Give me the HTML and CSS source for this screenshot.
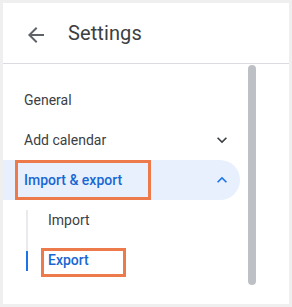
FILE: index.html
```html
<!DOCTYPE html>
<html lang="en">
<head>
<meta charset="utf-8">
<title>Settings</title>
<link rel="stylesheet" href="styles.css">
</head>
<body>
<div class="panel">
  <header class="header">
    <svg class="back" width="24" height="24" viewBox="0 0 24 24"><path d="M20 11H7.83l5.59-5.59L12 4l-8 8 8 8 1.41-1.41L7.83 13H20v-2z" fill="#5f6368"/></svg>
    <h1 class="title">Settings</h1>
  </header>
  <div class="content">
    <nav class="nav">
      <div class="item">General</div>
      <div class="item">Add calendar
        <svg class="chev" width="20" height="20" viewBox="0 0 24 24"><path d="M16.59 8.59L12 13.17 7.41 8.59 6 10l6 6 6-6z" fill="#3c4043"/></svg>
      </div>
      <div class="item active">Import &amp; export
        <svg class="chev" width="20" height="20" viewBox="0 0 24 24"><path d="M7.41 15.41L12 10.83l4.59 4.58L18 14l-6-6-6 6z" fill="#1a73e8"/></svg>
        <span class="mark mark-group"></span>
      </div>
      <div class="sub">
        <div class="subitem">Import</div>
        <div class="subitem current">Export<span class="mark mark-export"></span></div>
      </div>
    </nav>
    <div class="track"><div class="thumb"></div></div>
  </div>
</div>
</body>
</html>
```
FILE: styles.css
```css
html, body {
  margin: 0;
  padding: 0;
}
body {
  background: #efefef;
  font-family: Roboto, "Liberation Sans", Arial, sans-serif;
  width: 292px;
  height: 307px;
  overflow: hidden;
}
.panel {
  margin: 3px;
  width: 286px;
  height: 301px;
  background: #ffffff;
  display: flex;
  flex-direction: column;
}
.header {
  height: 60px;
  border-bottom: 1px solid #dadce0;
  display: flex;
  align-items: center;
  flex-shrink: 0;
}
.back {
  margin-left: 21px;
  margin-top: 3px;
}
.title {
  margin: 0 0 0 20px;
  font-size: 20px;
  font-weight: 400;
  color: #3c4043;
  letter-spacing: 0.1px;
}
.content {
  flex: 1;
  display: flex;
  min-height: 0;
}
.nav {
  width: 237px;
  padding-top: 16px;
}
.item {
  position: relative;
  height: 40px;
  display: flex;
  align-items: center;
  justify-content: space-between;
  padding: 0 8px 0 21px;
  font-size: 14px;
  color: #3c4043;
}
.item.active {
  background: #e8f0fe;
  border-radius: 0 20px 20px 0;
  color: #1967d2;
  font-weight: 500;
}
.chev {
  display: block;
}
.sub {
  position: relative;
  margin-left: 23px;
}
.sub::before {
  content: "";
  position: absolute;
  left: 0;
  top: 10px;
  bottom: 9px;
  width: 2px;
  background: #e8eaed;
}
.subitem {
  position: relative;
  height: 40px;
  display: flex;
  align-items: center;
  padding-left: 22px;
  font-size: 14px;
  color: #3c4043;
}
.subitem.current {
  color: #1967d2;
  font-weight: 500;
}
.subitem.current::before {
  content: "";
  position: absolute;
  left: 0;
  top: 11px;
  width: 2px;
  height: 20px;
  background: #1a73e8;
}
.mark {
  position: absolute;
  border: 3.5px solid #ec7a4a;
  box-sizing: border-box;
}
.mark-group {
  left: 12px;
  top: 0;
  width: 136px;
  height: 40px;
}
.mark-export {
  left: 15px;
  top: 8px;
  width: 85px;
  height: 29px;
}
.track {
  padding: 1px 0 0 8px;
}
.thumb {
  width: 8px;
  height: 220px;
  border-radius: 4px;
  background: #bdc1c6;
}
```
